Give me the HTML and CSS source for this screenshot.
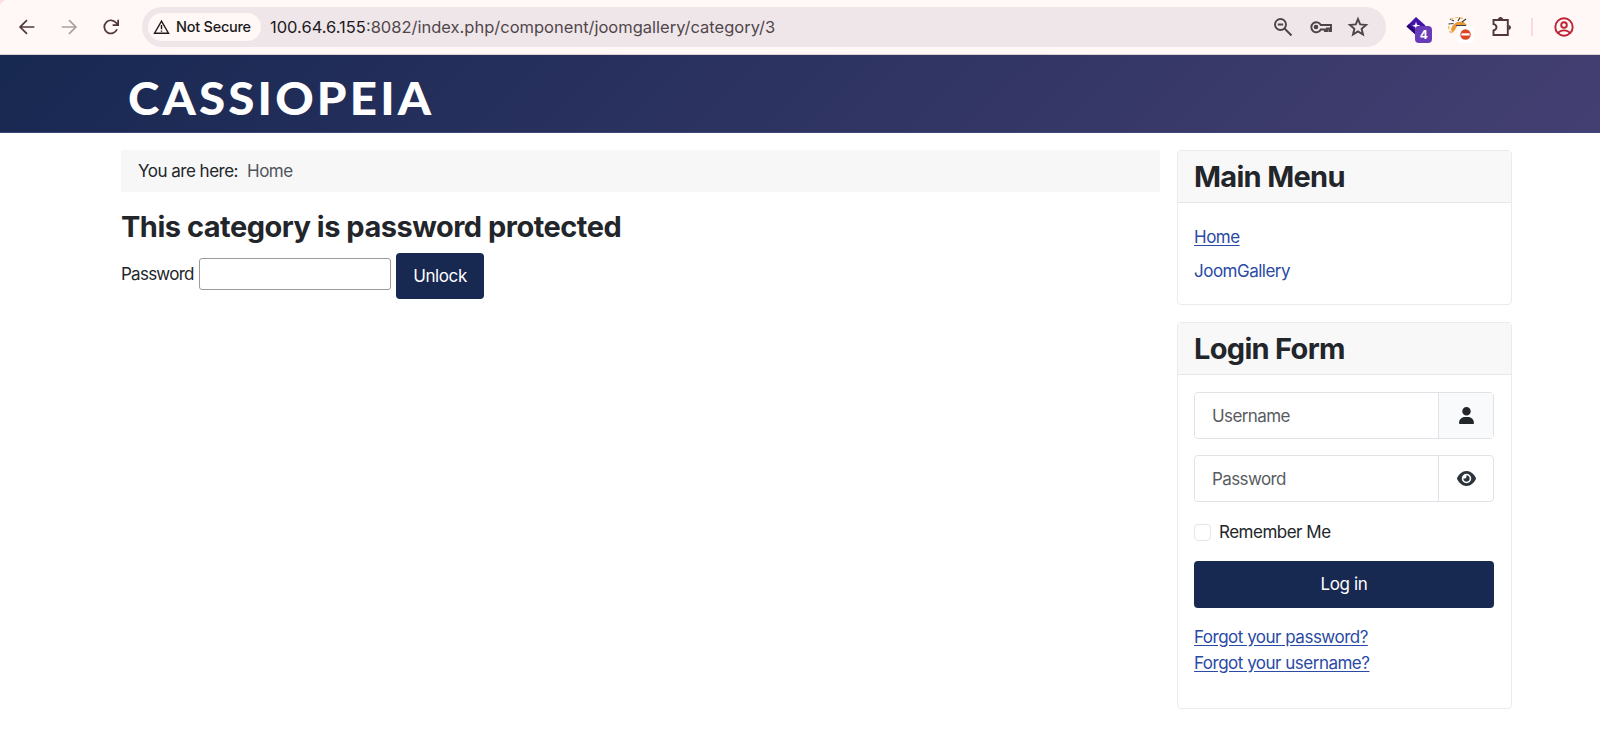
FILE: index.html
```html
<!DOCTYPE html>
<html lang="en">
<head>
    <meta charset="UTF-8">
    <meta name="viewport" content="width=device-width, initial-scale=1.0">
    <title>Cassiopeia</title>
    <link rel="stylesheet" href="styles.css">
</head>
<body>
    <div class="toolbar">
        <div class="nav-buttons">
            <svg class="icon" viewBox="0 0 24 24"><path d="M20 12H5M12 4.500L4.500 12l7.500 7.500"/></svg>
            <svg class="icon icon-disabled" viewBox="0 0 24 24"><path d="M4 12h15M12 4.500l7.500 7.500-7.500 7.500"/></svg>
            <svg class="icon" viewBox="0 0 24 24"><path d="M18.600 14.500a7.200 7.200 0 1 1-.8-6.800l1.700 2M19.800 4v6h-6"/></svg>
        </div>
        <div class="omnibox">
            <div class="chip">
                <svg class="warning" viewBox="0 0 18 16"><path d="M9 1.800L16.400 14.600H1.600zM9 6v4.500M9 11.600v1.500"/></svg>
                <span>Not Secure</span>
            </div>
            <div class="url"><span class="host">100.64.6.155</span><span class="path">:8082/index.php/component/joomgallery/category/3</span></div>
            <div class="omnibox-icons">
                <svg class="icon" viewBox="1 1 22 22"><circle cx="9.500" cy="9.500" r="5.500"/><path d="M6.800 9.500h5.400M13.500 13.500l7 7"/></svg>
                <svg class="icon icon-key" viewBox="1 0 22 14"><path d="M11.800 5h10.200v6h-1.700V8.500h-2.300V11h-2V9.500h-4.200A5 5 0 1 1 11.800 5z"/><circle class="solid" cx="7" cy="7" r="2.300"/></svg>
                <svg class="icon" viewBox="1 1 22 22"><path d="M12 4l2.200 5.400 5.900.5-4.500 3.900 1.400 5.700-5-3.100-5 3.100 1.400-5.700-4.500-3.900 5.900-.5z"/></svg>
            </div>
        </div>
        <div class="extensions">
            <div class="extension">
                <svg viewBox="0 0 20 20"><path fill="#4310a8" d="M10 0l9.500 8.500L10 18 .5 9.500z"/><path fill="#280675" d="M.5 9.500L10 18v-4L3 7z"/><path fill="#fff" d="M10 4.500l1 3.300 3.500 1-3.500 1-1 3.300-1-3.300-3-1 3-1z"/></svg>
                <span class="badge badge-count">4</span>
            </div>
            <div class="extension">
                <svg viewBox="0 0 20 20"><path fill="#e99a36" d="M5 8l4-3 6-.5 4 3.500-3 1H9L7 13l-3 3-1-4z"/><path fill="none" stroke="#34444a" stroke-width="1.200" d="M2 2l4 2M.5 7l5-.5M12 .5L10 4M18 2l-4 3M8 8.500h10"/><path fill="none" stroke="#f5bd68" stroke-width="1.500" stroke-dasharray="3 2" d="M3 3C7-1 12 0 15 2M1 9c-1 4 1 6 4 8"/></svg>
                <span class="badge badge-blocked"><svg viewBox="0 0 12 12"><circle cx="6" cy="6" r="5.700" fill="#db4527"/><path fill="#fff" d="M1.500 4.700h9v2.400h-9z"/></svg></span>
            </div>
            <svg class="icon puzzle" viewBox="0 0 22 22"><path d="M3.500 4h14.300v15H3.500v-4.500c4-1.500 4-5.300 0-6.300z"/><path class="solid" d="M8 3.500a2.500 2.500 0 0 1 5 0zM18.500 9a2.400 2.400 0 0 1 0 5z"/></svg>
            <span class="separator"></span>
            <svg class="icon profile" viewBox="0 0 20 20"><circle cx="10" cy="10" r="8.700"/><circle cx="10" cy="8" r="2.800"/><path d="M4 16c3-3.500 9-3.500 12 0"/></svg>
        </div>
    </div>
    <header class="header">
        <div class="brand">CASSIOPEIA</div>
    </header>
    <div class="container">
        <main>
            <nav class="breadcrumb">
                <span class="here">You are here:</span>
                <span class="crumb">Home</span>
            </nav>
            <h2 class="page-title">This category is password protected</h2>
            <form class="unlock-form">
                <label for="category-password">Password</label>
                <input type="password" id="category-password">
                <button type="button" class="btn">Unlock</button>
            </form>
        </main>
        <aside class="sidebar">
            <div class="card">
                <h3 class="card-header">Main Menu</h3>
                <div class="card-body menu">
                    <a href="#" class="current">Home</a>
                    <a href="#" class="gallery">JoomGallery</a>
                </div>
            </div>
            <div class="card">
                <h3 class="card-header">Login Form</h3>
                <form class="card-body login">
                    <div class="input-group">
                        <input type="text" placeholder="Username">
                        <span class="addon addon-user"><svg width="15" height="17" viewBox="0 0 448 512"><path d="M224 256a128 128 0 1 0 0-256 128 128 0 1 0 0 256zm-46 48C80 304 0 384 0 482c0 17 13 30 30 30h388c17 0 30-13 30-30 0-98-80-178-178-178z"/></svg></span>
                    </div>
                    <div class="input-group">
                        <input type="password" placeholder="Password">
                        <span class="addon"><svg width="19" height="17" viewBox="0 0 576 512"><path d="M288 32c-81 0-145 37-193 81C49 156 18 207 3 244c-3 8-3 17 0 25 15 36 46 87 92 130 48 44 112 81 193 81s145-37 193-81c46-43 77-94 92-130 3-8 3-17 0-25-15-37-46-88-92-131-48-44-112-81-193-81zM144 256a144 144 0 1 1 288 0 144 144 0 1 1-288 0zm144-64c0 35-29 64-64 64-7 0-14-1-20-3-6-2-12 2-12 7 0 7 1 14 3 21 14 51 66 82 118 68s82-66 68-118c-11-41-47-69-87-71-6 0-9 6-8 12 1 6 2 13 2 20z"/></svg></span>
                    </div>
                    <label class="remember"><input type="checkbox"><span>Remember Me</span></label>
                    <button type="button" class="btn">Log in</button>
                    <div class="links">
                        <a href="#">Forgot your password?</a>
                        <a href="#">Forgot your username?</a>
                    </div>
                </form>
            </div>
        </aside>
    </div>
</body>
</html>
```
FILE: styles.css
```css
* {
    box-sizing: border-box;
}

body {
    margin: 0;
    font-family: Inter, sans-serif;
    font-size: 17px;
    line-height: 26px;
    letter-spacing: -0.5px;
    color: #22262a;
    background-color: white;
}

.toolbar {
    display: flex;
    align-items: center;
    height: 55px;
    padding: 0 26px 0 16px;
    background: radial-gradient(circle at 8px 8px, #fff8f6 8px, #ffdce0 9px) 0 0 / 8px 8px no-repeat #fff8f6;
    border-bottom: 1px solid #dfd0d2;
}

.nav-buttons {
    display: flex;
    gap: 18px;
    width: 126px;
}

.icon {
    width: 24px;
    height: 24px;
    fill: none;
    stroke: #4f373d;
    stroke-width: 1.9;
}

.nav-buttons .icon {
    flex: none;
    width: 22px;
    height: 22px;
    margin-right: 2px;
}

.icon .solid {
    fill: #4f373d;
    stroke: none;
}

.nav-buttons .icon-disabled {
    stroke: #aaa0a2;
}

.omnibox {
    display: flex;
    align-items: center;
    width: 1244px;
    height: 40px;
    padding: 0 17px 0 6px;
    background-color: #efe6ea;
    border-radius: 20px;
}

.chip {
    display: flex;
    align-items: center;
    gap: 6px;
    width: 113px;
    height: 28px;
    padding-left: 5px;
    background-color: #fff8f6;
    border-radius: 14px;
    color: #201a1c;
    font-size: 14.5px;
    font-weight: 500;
    letter-spacing: -0.25px;
    white-space: nowrap;
}

.warning {
    flex: none;
    width: 17px;
    height: 16px;
    fill: none;
    stroke: #201a1c;
    stroke-width: 1.5;
}

.url {
    flex: 1;
    margin-left: 9px;
    font-size: 16.5px;
    letter-spacing: 0;
    color: #51464a;
}

.host {
    color: #201a1c;
}

.omnibox-icons {
    display: flex;
    align-items: center;
    gap: 15.5px;
}

.omnibox-icons .icon {
    width: 22px;
    height: 22px;
    stroke: #4d4447;
}

.omnibox-icons .icon .solid {
    fill: #4d4447;
}

.extensions {
    display: flex;
    align-items: center;
    flex: 1;
    padding-left: 20px;
}

.extension {
    position: relative;
    width: 20px;
    height: 20px;
    margin-right: 22px;
}

.extension svg {
    display: block;
    width: 100%;
    height: 100%;
}

.badge {
    position: absolute;
    left: 9px;
    top: 9px;
    width: 17px;
    height: 17px;
    border-radius: 4px;
}

.badge-count {
    background-color: #683bb8;
    color: white;
    font-size: 12px;
    font-weight: 700;
    line-height: 17px;
    text-align: center;
}

.badge-blocked {
    padding: 3px;
    background-color: white;
}

.puzzle {
    width: 22px;
    height: 22px;
}

.separator {
    width: 2px;
    height: 18px;
    margin-left: 19px;
    background-color: #ffd8de;
}

.profile {
    width: 20px;
    height: 20px;
    margin-left: auto;
    stroke: #bf2032;
}

.header {
    height: 78px;
    padding: 16px 0 0 128px;
    background: linear-gradient(135deg, #172851, #443f72);
    border-bottom: 1px solid #3d4675;
}

.brand {
    width: max-content;
    color: white;
    font-family: Lato, sans-serif;
    font-size: 45px;
    font-weight: 900;
    line-height: 54px;
    letter-spacing: 3px;
    transform: scaleX(1.055);
    transform-origin: left;
}

.container {
    display: grid;
    grid-template-columns: 1039px 335px;
    gap: 17px;
    padding: 17px 0 0 121px;
}

.breadcrumb {
    display: flex;
    align-items: center;
    gap: 9px;
    height: 42px;
    padding-left: 17px;
    background-color: #f7f7f7;
}

.crumb {
    color: #50555d;
}

.page-title {
    margin: 17px 0 7.5px;
    font-size: 29px;
    line-height: 36px;
    letter-spacing: -0.5px;
}

.unlock-form {
    display: flex;
    align-items: flex-start;
}

.unlock-form label {
    width: 78px;
    padding-top: 8px;
    letter-spacing: -0.75px;
}

.unlock-form input {
    width: 192px;
    height: 32px;
    margin: 5px 5px 0 0;
    border: 1px solid #9b9b9b;
    border-radius: 3px;
}

.btn {
    height: 46.5px;
    padding: 0 17px;
    background-color: #172851;
    border: none;
    border-radius: 4px;
    color: white;
    font: inherit;
    letter-spacing: -0.4px;
}

.unlock-form .btn {
    width: 88px;
}

.card {
    margin-bottom: 17px;
    border: 1px solid #ebebeb;
    border-radius: 4px;
}

.card-header {
    height: 52px;
    margin: 0;
    padding: 8px 16px;
    background-color: #f8f8f8;
    border-bottom: 1px solid #e8e8e8;
    font-size: 29px;
    line-height: 36px;
    letter-spacing: -0.7px;
}

.card-body {
    display: flex;
    flex-direction: column;
    padding: 16px 17px 16px 16px;
}

.card a {
    color: #2a4aa5;
    text-underline-offset: 2px;
}

.menu {
    align-items: flex-start;
    gap: 8px;
    height: 101px;
    padding-top: 21px;
}

.card .gallery {
    text-decoration: none;
}

.login {
    height: 333px;
    padding-top: 17px;
}

.input-group {
    display: flex;
    flex: none;
    height: 47px;
    margin-bottom: 16px;
    border: 1px solid #dfe3e8;
    border-radius: 4px;
}

.input-group input {
    flex: 1;
    min-width: 0;
    padding: 0 17px;
    border: none;
    border-radius: 4px;
    font: inherit;
    letter-spacing: -0.6px;
}

.input-group input::placeholder {
    color: #595c5f;
}

.addon {
    display: flex;
    align-items: center;
    justify-content: center;
    width: 55px;
    border-left: 1px solid #dfe3e8;
    fill: #2d353c;
}

.addon-user {
    background-color: #f9fafb;
    fill: #22262a;
}

.remember {
    display: flex;
    align-items: center;
    gap: 8px;
    margin: 1px 0 16px;
}

.remember input {
    appearance: none;
    width: 17px;
    height: 17px;
    margin: 0;
    border: 1px solid #e6e6e6;
    border-radius: 4px;
}

.login .btn {
    flex: none;
}

.links {
    display: flex;
    flex-direction: column;
    align-items: flex-start;
    margin-top: 16px;
}
```
